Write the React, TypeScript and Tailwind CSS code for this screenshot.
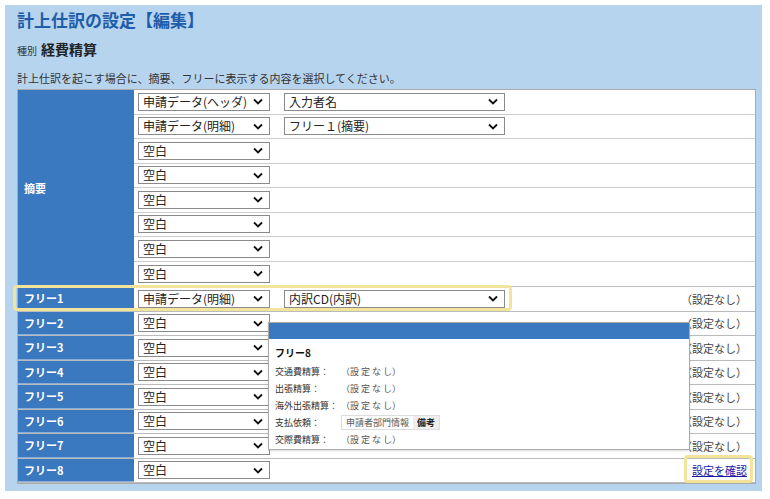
const FONT = { fontFamily: '"Noto Sans CJK JP", "Noto Sans", sans-serif' };

const Chevron = () => (
  <svg width="10" height="7" viewBox="0 0 10 7" className="shrink-0">
    <path d="M1 1.5 L5 5.5 L9 1.5" fill="none" stroke="#111" strokeWidth="1.8" />
  </svg>
);

const Select = ({ value, w }: { value: string; w: string }) => (
  <div className={`${w} h-[18px] border border-[#8a8a8a] bg-white flex items-center justify-between pl-1 pr-1.5 text-[12px] text-[#222] leading-none`}>
    <span>{value}</span>
    <Chevron />
  </div>
);

const tekiyo: [string, string?][] = [
  ['申請データ(ヘッダ)', '入力者名'],
  ['申請データ(明細)', 'フリー１(摘要)'],
  ['空白'], ['空白'], ['空白'], ['空白'], ['空白'], ['空白'],
];

const popupRows: [string, string | null][] = [
  ['交通費精算：', '（設 定 な し）'],
  ['出張精算：', '（設 定 な し）'],
  ['海外出張精算：', '（設 定 な し）'],
  ['支払依頼：', null],
  ['交際費精算：', '（設 定 な し）'],
];

export default function App() {
  return (
    <div style={FONT} className="w-[770px] h-[499px] bg-white p-[5px] pr-[8px]">
      <div className="bg-[#b7d4ef] h-[486px] px-3 pt-[4px] relative">
        <h1 className="text-[17px] font-bold text-[#1f5da8] leading-[22px]">計上仕訳の設定【編集】</h1>
        <div className="mt-[8px] flex items-baseline gap-1">
          <span className="text-[10px] text-[#333]">種別</span>
          <span className="text-[14px] font-bold text-[#222]">経費精算</span>
        </div>
        <p className="mt-[11px] text-[11px] text-[#333] leading-[14px]">計上仕訳を起こす場合に、摘要、フリーに表示する内容を選択してください。</p>
        <div className="mt-[4px] w-[739px] bg-white border border-[#aaa] relative">
          <div className="flex border-b border-[#bbb]">
            <div className="w-[116px] bg-[#3a78c0] text-white text-[11px] font-bold flex items-center pl-[6px]">摘要</div>
            <div className="flex-1">
              {tekiyo.map(([a, b], i) => (
                <div key={i} className="h-[24.5px] border-b last:border-b-0 border-[#ccc] flex items-center pl-1 gap-[14px]">
                  <Select value={a} w="w-[132px]" />
                  {b && <Select value={b} w="w-[221px]" />}
                </div>
              ))}
            </div>
          </div>
          {[1, 2, 3, 4, 5, 6, 7, 8].map((n) => (
            <div key={n} className="flex h-[24.5px] border-b last:border-b-0 border-[#bbb]">
              <div className="w-[116px] bg-[#3a78c0] text-white text-[11px] font-bold flex items-center pl-[6px] border-b border-white/40">フリー{n}</div>
              <div className="flex-1 flex items-center pl-1 gap-[14px] pr-2">
                <Select value={n === 1 ? '申請データ(明細)' : '空白'} w="w-[132px]" />
                {n === 1 && <Select value="内訳CD(内訳)" w="w-[221px]" />}
                <span className="ml-auto text-[11px] text-[#444]">
                  {n === 8 ? <span className="text-[#1a1aa8] underline">設定を確認</span> : '（設定なし）'}
                </span>
              </div>
            </div>
          ))}
          <div className="absolute left-[-5px] top-[195px] w-[499px] h-[26px] border-[3px] border-[#f3e49c] rounded-sm pointer-events-none" />
          <div className="absolute left-[666px] top-[365px] w-[69px] h-[28px] border-[3px] border-[#f3e49c] rounded-sm pointer-events-none" />
          <div className="absolute left-[250px] top-[232px] w-[422px] h-[128px] bg-white border border-[#aaa] shadow">
            <div className="h-[16px] bg-[#3a78c0]" />
            <div className="px-[6px] pt-[6px]">
              <div className="text-[10px] font-bold text-[#111] mb-[3px]">フリー8</div>
              {popupRows.map(([k, v]) => (
                <div key={k} className="flex items-center h-[17px] text-[9px] text-[#333]">
                  <span className="w-[66px]">{k}</span>
                  {v ? <span className="text-[#555]">{v}</span> : (
                    <span className="flex bg-[#eee] border border-[#ddd]">
                      <span className="bg-white px-1 text-[#555]">申請者部門情報</span>
                      <span className="px-1 font-bold text-[#222]">備考</span>
                    </span>
                  )}
                </div>
              ))}
            </div>
          </div>
        </div>
      </div>
    </div>
  );
}
